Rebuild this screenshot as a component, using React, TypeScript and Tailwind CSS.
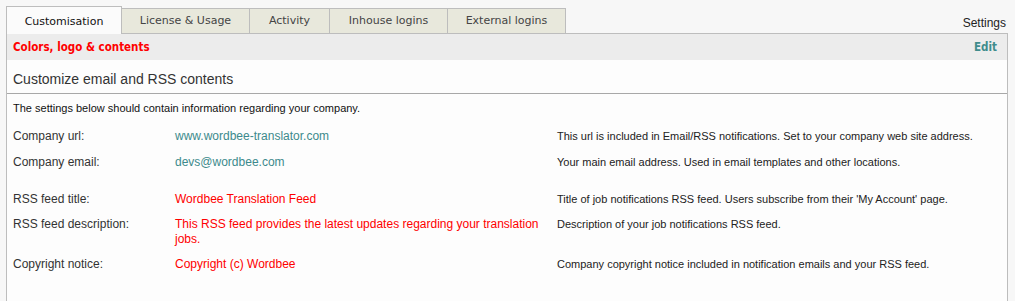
const tabs = ['Customisation', 'License & Usage', 'Activity', 'Inhouse logins', 'External logins'];

const tabWidths = ['w-[116px]', 'w-[128px]', 'w-[80px]', 'w-[118px]', 'w-[118px]'];

interface Row {
  label: string;
  value: string;
  help: string;
  tone: 'link' | 'red';
  gap: string;
}

const rows: Row[] = [
  {
    label: 'Company url:',
    value: 'www.wordbee-translator.com',
    help: 'This url is included in Email/RSS notifications. Set to your company web site address.',
    tone: 'link',
    gap: 'mt-0',
  },
  {
    label: 'Company email:',
    value: 'devs@wordbee.com',
    help: 'Your main email address. Used in email templates and other locations.',
    tone: 'link',
    gap: 'mt-[1px]',
  },
  {
    label: 'RSS feed title:',
    value: 'Wordbee Translation Feed',
    help: "Title of job notifications RSS feed. Users subscribe from their 'My Account' page.",
    tone: 'red',
    gap: 'mt-[12px]',
  },
  {
    label: 'RSS feed description:',
    value: 'This RSS feed provides the latest updates regarding your translation jobs.',
    help: 'Description of your job notifications RSS feed.',
    tone: 'red',
    gap: 'mt-0',
  },
  {
    label: 'Copyright notice:',
    value: 'Copyright (c) Wordbee',
    help: 'Company copyright notice included in notification emails and your RSS feed.',
    tone: 'red',
    gap: 'mt-0',
  },
];

const verdana = { fontFamily: '"DejaVu Sans", Verdana, sans-serif' };
const tahomaBold = { fontFamily: '"DejaVu Sans Condensed", "DejaVu Sans", Tahoma, sans-serif' };

export default function App() {
  return (
    <div className="h-[301px] overflow-hidden bg-[#f7f7f7] pt-[6px] pl-[6px] pr-[7px]" style={{ fontFamily: '"Liberation Sans", Arial, sans-serif' }}>
      {/* Tabs row */}
      <div className="flex items-end h-[27px]">
        {tabs.map((t, i) => (
          <div
            key={t}
            className={
              i === 0
                ? `${tabWidths[i]} h-[28px] -mb-px relative z-10 flex items-center justify-center pt-[3px] border border-b-0 border-[#bdbdbd] bg-[#fbfbfb] text-[11px] text-[#111]`
                : `${tabWidths[i]} h-[25px] flex items-center justify-center pt-[1px] border border-l-0 border-b-0 border-[#bdbdbd] bg-[#e8e8dc] text-[11px] text-[#444]`
            }
            style={verdana}
          >
            {t}
          </div>
        ))}
        <div className="flex-1" />
        <div className="text-[12px] text-[#222] pb-[1px] pr-[2px]">Settings</div>
      </div>

      {/* Panel */}
      <div className="h-[300px] border border-[#bdbdbd] bg-[#fdfdfd]">
        <div className="flex items-center justify-between h-[26px] pt-[2px] bg-[#ececec] pl-[6px] pr-[10px]">
          <span className="text-[11.5px] font-bold text-[#ff0000]" style={tahomaBold}>
            Colors, logo &amp; contents
          </span>
          <span className="text-[11.5px] font-bold text-[#3f8c8c]" style={tahomaBold}>
            Edit
          </span>
        </div>
        <div className="h-[34px] pl-[6px] pt-[10px] border-b border-[#a8a8a8] text-[14px] leading-[18px] text-[#333]">
          Customize email and RSS contents
        </div>
        <div className="pl-[6px] pt-[6px] text-[11px] text-[#111]">
          The settings below should contain information regarding your company.
        </div>
        <div className="pl-[6px] pt-[7px]">
          {rows.map((r) => (
            <div key={r.label} className={`flex items-start ${r.gap} py-[5px]`}>
              <div className="w-[162px] shrink-0 text-[12px] leading-[15px] text-[#333]">{r.label}</div>
              <div
                className={`w-[370px] shrink-0 text-[12px] leading-[15px] ${
                  r.tone === 'link' ? 'text-[#3c8a8c]' : 'text-[#ff0000]'
                }`}
              >
                {r.value}
              </div>
              <div className="ml-[12px] text-[11px] leading-[15px] text-[#222]">{r.help}</div>
            </div>
          ))}
        </div>
      </div>
    </div>
  );
}
